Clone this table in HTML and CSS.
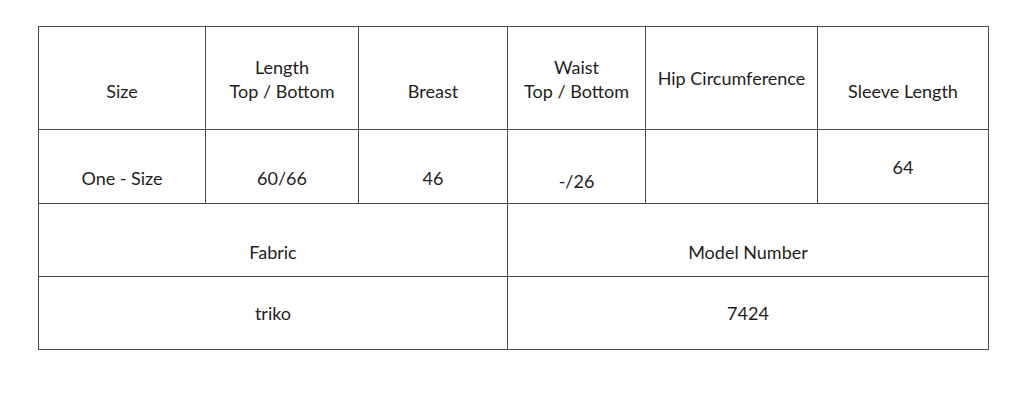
FILE: index.html
```html
<!DOCTYPE html>
<html>
<head>
<meta charset="utf-8">
<link rel="stylesheet" href="styles.css">
</head>
<body>
<div class="wrap">
  <div class="table">
    <div class="cell low">Size</div>
    <div class="cell two">Length<br>Top / Bottom</div>
    <div class="cell low">Breast</div>
    <div class="cell two">Waist<br>Top / Bottom</div>
    <div class="cell">Hip Circumference</div>
    <div class="cell low">Sleeve Length</div>

    <div class="cell mid">One - Size</div>
    <div class="cell mid">60/66</div>
    <div class="cell mid">46</div>
    <div class="cell low2">-/26</div>
    <div class="cell"></div>
    <div class="cell">64</div>

    <div class="cell span mid">Fabric</div>
    <div class="cell span mid">Model Number</div>

    <div class="cell span">triko</div>
    <div class="cell span">7424</div>
  </div>
</div>
</body>
</html>
```

FILE: styles.css
```css
html, body {
  margin: 0;
  background: #fff;
}
.wrap {
  padding: 26px 0 0 38px;
}
.table {
  display: grid;
  width: 951px;
  box-sizing: border-box;
  grid-template-columns: 167px 153px 149px 138px 172px 171px;
  grid-template-rows: 103px 74px 73px 73px;
  border-left: 1px solid #4a4a4a;
  border-top: 1px solid #4a4a4a;
  font-family: Lato, "Open Sans", sans-serif;
  font-size: 18px;
  line-height: 24px;
  color: #1e1e1e;
}
.cell {
  box-sizing: border-box;
  border-right: 1px solid #4a4a4a;
  border-bottom: 1px solid #4a4a4a;
  display: flex;
  align-items: center;
  justify-content: center;
  text-align: center;
}
.low {
  padding-top: 26px;
}
.mid {
  padding-top: 23px;
}
.low2 {
  padding-top: 28px;
}
.two {
  padding-top: 2px;
}
.span {
  grid-column: span 3;
}
```
